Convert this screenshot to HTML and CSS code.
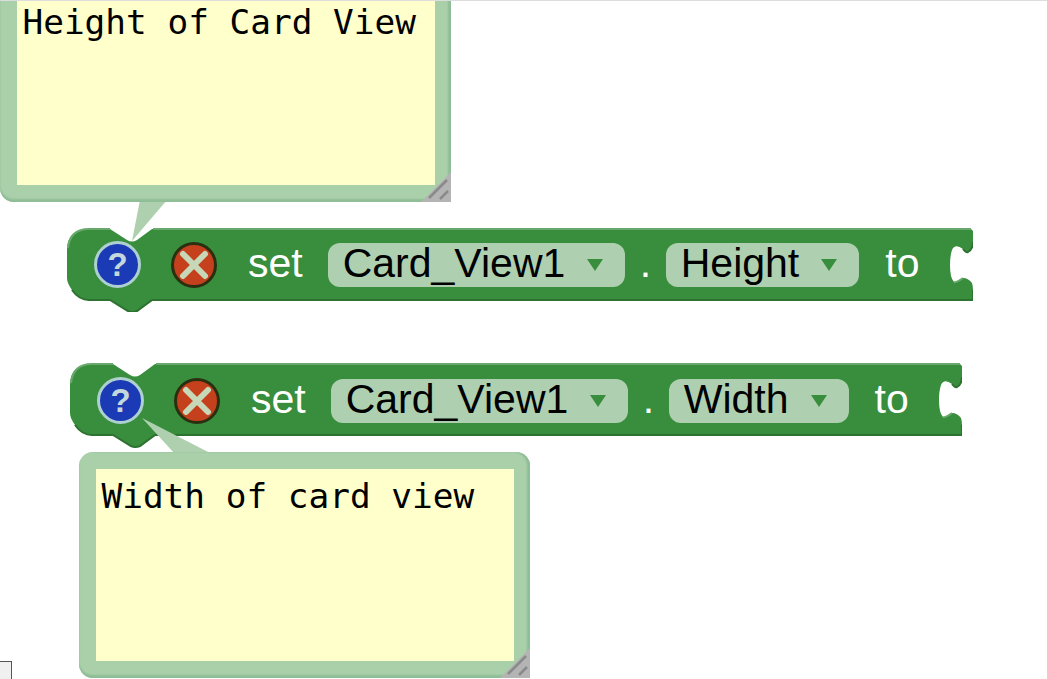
FILE: index.html
```html
<!DOCTYPE html>
<html lang="en">
<head>
    <meta charset="UTF-8">
    <meta name="viewport" content="width=device-width, initial-scale=1.0">
    <title>Card View blocks</title>
    <link rel="stylesheet" href="styles.css">
</head>
<body>
    <div class="canvas">
        <div class="top-line"></div>

        <!-- height block -->
        <div class="block block-height">
            <svg class="block-shape" width="906" height="84" viewBox="0 0 906 84">
                <path class="shape-fill" d="M0 22Q0 1 22 1H43L60 12Q65 15 70 12L85 1H904L906 3V14Q906 21 901 24Q899 25 896 21Q888 15 885 22Q883 28 883 37Q883 50 887 54Q889 55 896 50Q901 50 905 55Q906 58 906 62V73H85L70 83Q65 85 61 83L43 72H22Q12 72 5 62Q0 55 0 50Z"/>
                <path class="shape-light" d="M1 20Q3 1 22 1H43M86 1H904M887 54Q889 55 896 50"/>
                <path class="shape-dark" d="M906 62V72H85L70 83Q65 85 61 83L43 72H22Q12 72 5 62M906 14Q906 21 901 24Q899 25 896 21"/>
            </svg>
            <div class="block-row">
                <span class="help">?</span>
                <span class="close">
                    <svg width="30" height="30" viewBox="0 0 30 30"><path d="M4 4L26 26M26 4L4 26"/></svg>
                </span>
                <span class="word word-set">set</span>
                <span class="field">Card_View1<i class="arrow"></i></span>
                <span class="word dot">.</span>
                <span class="field">Height<i class="arrow"></i></span>
                <span class="word word-to">to</span>
            </div>
        </div>

        <!-- width block -->
        <div class="block block-width">
            <svg class="block-shape" width="892" height="85" viewBox="0 0 892 85">
                <path class="shape-fill" d="M0 22Q0 1 22 1H43L60 12Q65 15 70 12L85 1H890L892 3V14Q892 21 887 24Q885 25 882 21Q874 15 871 22Q869 28 869 37Q869 50 873 54Q875 55 882 50Q887 50 891 55Q892 58 892 62V73H85L70 83Q65 85 61 83L43 72H22Q12 72 5 62Q0 55 0 50Z"/>
                <path class="shape-light" d="M1 20Q3 1 22 1H43M86 1H890M873 54Q875 55 882 50"/>
                <path class="shape-dark" d="M892 62V72H85L70 83Q65 85 61 83L43 72H22Q12 72 5 62M892 14Q892 21 887 24Q885 25 882 21"/>
            </svg>
            <div class="block-row">
                <span class="help">?</span>
                <span class="close">
                    <svg width="30" height="30" viewBox="0 0 30 30"><path d="M4 4L26 26M26 4L4 26"/></svg>
                </span>
                <span class="word word-set">set</span>
                <span class="field">Card_View1<i class="arrow"></i></span>
                <span class="word dot">.</span>
                <span class="field">Width<i class="arrow"></i></span>
                <span class="word word-to">to</span>
            </div>
        </div>

        <!-- comment bubbles -->
        <svg class="tail tail-height" width="40" height="42" viewBox="0 0 40 42"><polygon points="10,0 37,0 2,41"/></svg>
        <div class="comment comment-height">
            <div class="comment-text">Height of Card View</div>
            <svg class="grip" width="30" height="30" viewBox="0 0 30 30">
                <polygon class="grip-bg" points="30,0 30,30 0,30"/>
                <path class="grip-line" d="M26 8L8 26M27 19L19 27"/>
            </svg>
        </div>

        <svg class="tail tail-width" width="72" height="38" viewBox="0 0 72 38"><polygon points="1,0 34,36 71,36"/></svg>
        <div class="comment comment-width">
            <div class="comment-text">Width of card view</div>
            <svg class="grip" width="30" height="30" viewBox="0 0 30 30">
                <polygon class="grip-bg" points="30,0 30,30 0,30"/>
                <path class="grip-line" d="M26 8L8 26M27 19L19 27"/>
            </svg>
        </div>

        <div class="corner-box"></div>
    </div>
</body>
</html>
```

FILE: styles.css
```css
html, body {
    margin: 0;
    padding: 0;
    background-color: #fff;
}
.canvas {
    position: relative;
    width: 1047px;
    height: 679px;
    overflow: hidden;
    font-family: "Liberation Sans", Arial, sans-serif;
}
.top-line {
    position: absolute;
    left: 0;
    top: 0;
    width: 100%;
    height: 1px;
    background-color: #ddd;
    z-index: 5;
}

/* blocks */
.block {
    position: absolute;
}
.block-height {
    left: 67px;
    top: 228px;
}
.block-width {
    left: 70px;
    top: 363px;
}
.block-shape {
    position: absolute;
    left: 0;
    top: 0;
}
.shape-fill {
    fill: #388e3c;
}
.shape-light {
    fill: none;
    stroke: #6aa96e;
    stroke-width: 2;
}
.shape-dark {
    fill: none;
    stroke: #2d7230;
    stroke-width: 2;
}
.block-row {
    position: relative;
    display: flex;
    align-items: center;
    height: 73px;
    padding-left: 27px;
}
.block-width .block-row {
    padding-top: 1px;
}
.help, .close {
    display: flex;
    align-items: center;
    justify-content: center;
    box-sizing: border-box;
    height: 46px;
    border-radius: 50%;
    flex: none;
}
.help {
    width: 47px;
    height: 47px;
    background-color: #1a3bb5;
    border: 3px solid #aed0d0;
    color: #c3d7dc;
    font-size: 33px;
    font-weight: bold;
}
.close {
    width: 46px;
    margin-left: 30px;
    background-color: #c5401c;
    border: 3px solid #2a2f10;
}
.close svg {
    display: block;
}
.close path {
    fill: none;
    stroke: #c6d8b8;
    stroke-width: 6;
    stroke-linecap: round;
}
.word {
    padding-bottom: 3px;
    color: #fff;
    font-size: 41px;
    line-height: 44px;
}
.word-set {
    margin-left: 31px;
    margin-right: 25px;
}
.dot {
    margin: 0 14.5px;
}
.word-to {
    margin-left: 26px;
}
.field {
    display: flex;
    align-items: center;
    box-sizing: border-box;
    height: 44px;
    padding: 0 22px 2px 15px;
    background-color: #aed0b0;
    border-radius: 12px;
    color: #000;
    font-size: 41px;
}
.arrow {
    width: 0;
    height: 0;
    margin-top: 2px;
    margin-left: 22px;
    border-left: 8px solid transparent;
    border-right: 8px solid transparent;
    border-top: 12px solid #388e3c;
}

/* comments */
.comment {
    position: absolute;
    box-sizing: border-box;
    width: 451px;
    padding: 17px 16px 17px 17px;
    border-radius: 14px;
    background-color: #aad0aa;
    box-shadow: inset 0 -3px 2px #8fbd95, inset -3px 0 2px #8fbd95;
}
.comment-height {
    left: 0;
    top: -22px;
    height: 224px;
}
.comment-width {
    left: 79px;
    top: 452px;
    height: 226px;
}
.comment-text {
    box-sizing: border-box;
    height: 100%;
    padding: 7px 5.5px;
    background-color: #ffc;
    font-family: "DejaVu Sans Mono", "Liberation Mono", monospace;
    font-size: 34.4px;
    line-height: 40px;
    color: #000;
    white-space: pre;
}
.grip {
    position: absolute;
    right: 0;
    bottom: 0;
}
.grip-bg {
    fill: #b4b4b4;
}
.grip-line {
    fill: none;
    stroke: #8a8a8a;
    stroke-width: 2.5;
}
.tail {
    position: absolute;
}
.tail polygon {
    fill: #aed0ae;
}
.tail-height {
    left: 130px;
    top: 200px;
}
.tail-width {
    left: 141px;
    top: 418px;
}

.corner-box {
    position: absolute;
    left: -2px;
    top: 661px;
    box-sizing: border-box;
    width: 14px;
    height: 20px;
    border: 1px solid #555;
    background-color: #f0f0f0;
}
```
